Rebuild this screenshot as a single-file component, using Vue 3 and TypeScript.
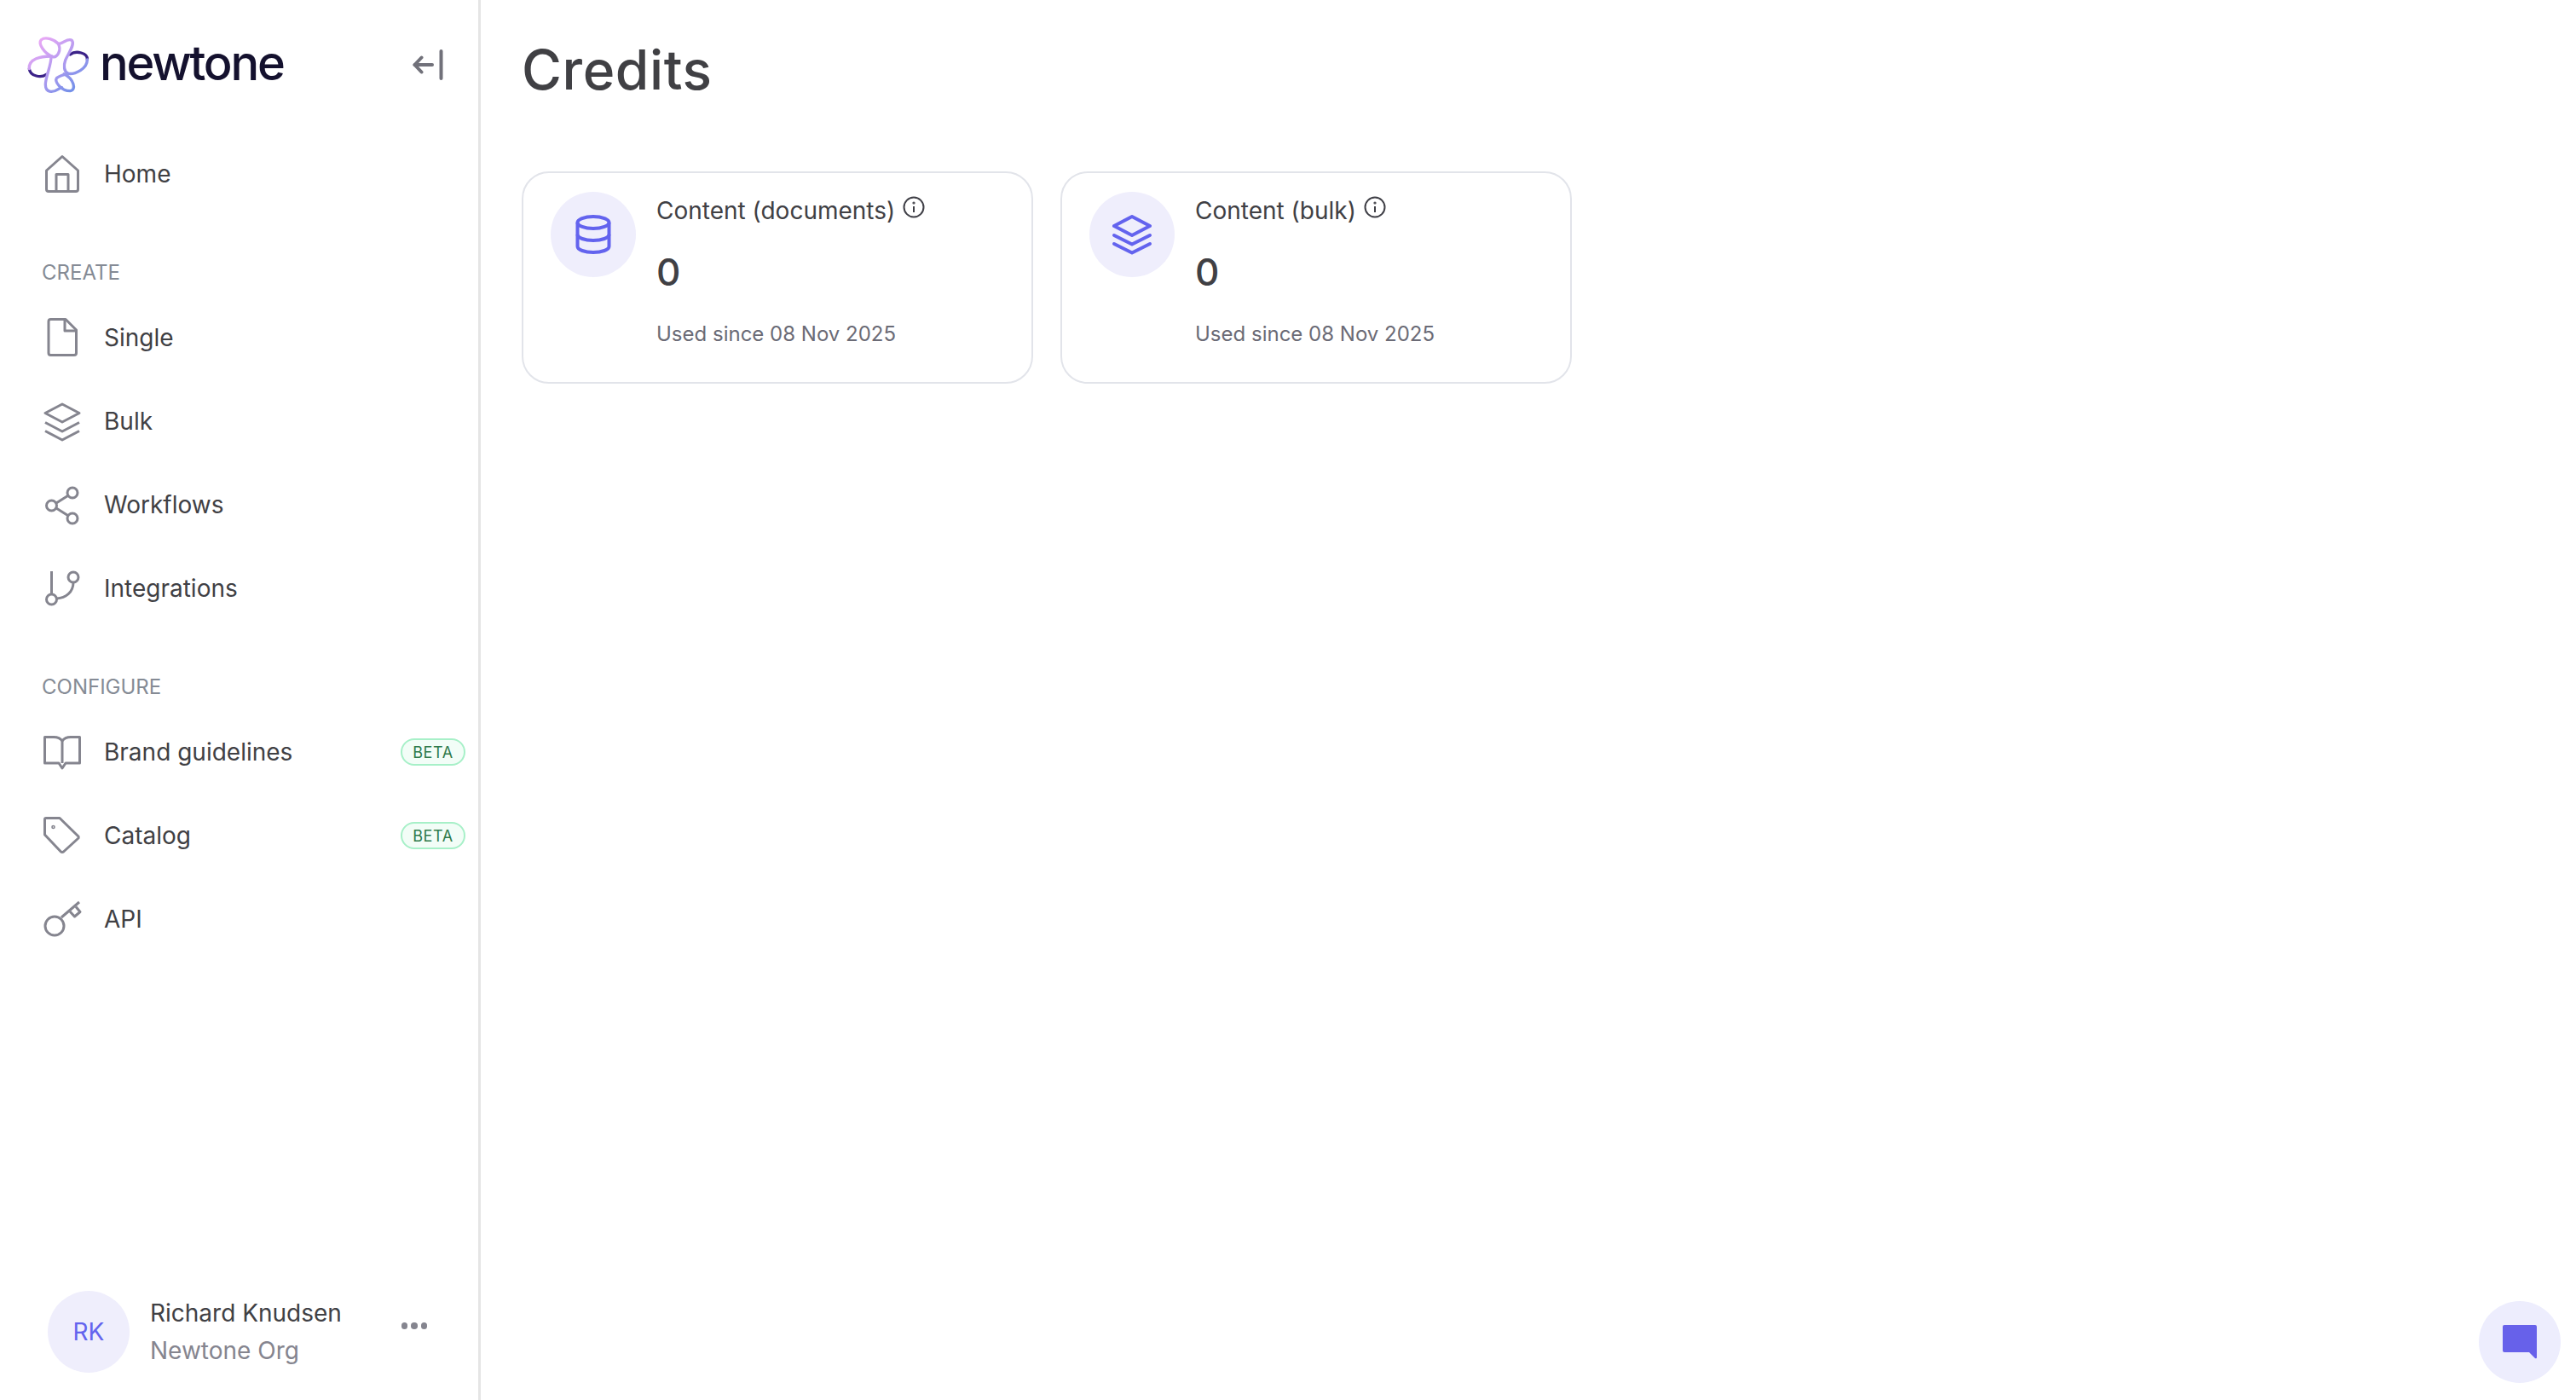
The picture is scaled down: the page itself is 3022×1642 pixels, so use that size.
<script setup lang="ts">
interface NavItem {
  label: string;
  icon: string;
  beta?: boolean;
}

interface CreditCard {
  title: string;
  icon: string;
  value: number;
  since: string;
}

const createItems: NavItem[] = [
  { label: 'Single', icon: 'file' },
  { label: 'Bulk', icon: 'layers' },
  { label: 'Workflows', icon: 'share' },
  { label: 'Integrations', icon: 'branch' },
];

const configureItems: NavItem[] = [
  { label: 'Brand guidelines', icon: 'book', beta: true },
  { label: 'Catalog', icon: 'tag', beta: true },
  { label: 'API', icon: 'key' },
];

const cards: CreditCard[] = [
  { title: 'Content (documents)', icon: 'database', value: 0, since: 'Used since 08 Nov 2025' },
  { title: 'Content (bulk)', icon: 'layers', value: 0, since: 'Used since 08 Nov 2025' },
];

const sections = [
  { name: 'CREATE', items: createItems },
  { name: 'CONFIGURE', items: configureItems },
];

// nav icons are drawn on a 50x50 box
const iconPaths: Record<string, string[]> = {
  home: ['M5.5 21 L24 4.5 L42.5 21 V43 Q42.5 45.5 40 45.5 H8 Q5.5 45.5 5.5 43 Z', 'M17 45.5 V25.5 H31 V45.5'],
  file: ['M10.5 3.5 H28 L40.5 16 V43 Q40.5 45.5 38 45.5 H10.5 Q8 45.5 8 43 V6 Q8 3.5 10.5 3.5 Z', 'M27 3.5 V17 H40.5'],
  layers: ['M24 5 L44 15.5 L24 26 L4 15.5 Z', 'M4 26.5 L24 37 L44 26.5', 'M4 36.5 L24 47 L44 36.5'],
  share: ['M17 23 L30.5 14.5', 'M17 29 L30.5 37.5'],
  branch: ['M11.5 5 V32', 'M37 18 C37 30 28 36 17.5 37'],
  book: ['M3.5 7.5 H14 Q21 7.5 24 12 Q27 7.5 34 7.5 H44.5 V38 H28 L24 44 L20 38 H3.5 Z', 'M24 12 V38'],
  tag: ['M3.5 6 Q3.5 4.5 5 4.5 H21 L43 26 Q43.5 27 43 28 L25.5 44 Q24 45 22.5 44 L3.5 24 Z'],
  key: ['M23 23 L44 5', 'M33 16 L38.5 22 L45 16.5 L40 10.5'],
};
</script>

<template>
  <div class="page">
    <aside class="sidebar">
      <div class="brand">
        <svg class="logo-mark" viewBox="0 0 270 240" fill="none" stroke-width="10" stroke-linecap="round">
          <defs>
            <linearGradient id="logoGrad" gradientUnits="userSpaceOnUse" x1="40" y1="40" x2="200" y2="220">
              <stop offset="0" stop-color="#f0aaf6" />
              <stop offset="0.5" stop-color="#b59bf0" />
              <stop offset="1" stop-color="#6a8fe8" />
            </linearGradient>
          </defs>
          <path d="M172 90 C192 74 235 84 232 108" stroke="#3b2288" />
          <path d="M28 140 C32 168 70 172 88 160" stroke="#3b2288" />
          <g stroke="url(#logoGrad)">
            <path d="M130 52 C118 38 85 25 70 38 C58 52 80 85 110 98 C128 102 142 72 130 52 Z" />
            <path d="M130 52 C145 52 165 30 178 40 C190 55 165 85 155 110 C148 130 150 150 165 157 C190 160 232 140 232 108" />
            <path d="M108 96 C70 95 24 105 28 140" />
            <path d="M105 97 C106 125 85 170 85 195 C85 225 110 225 130 212 C136 208 140 206 143 206" />
            <path d="M165 157 C150 160 135 165 125 172 C115 185 140 218 172 218 C195 215 185 175 150 158" />
          </g>
        </svg>
        <span class="wordmark">newtone</span>
        <button class="collapse" type="button" aria-label="Collapse sidebar">
          <svg viewBox="0 0 36 36" width="36" height="36" fill="none" stroke="#71717a" stroke-width="4" stroke-linecap="round" stroke-linejoin="round">
            <path d="M33.5 2 V34" />
            <path d="M2.5 18 H23" />
            <path d="M10.5 9.5 L2.5 18 L10.5 26.5" />
          </svg>
        </button>
      </div>

      <nav class="nav">
        <a class="nav-item">
          <svg class="nav-icon" viewBox="0 0 50 50" fill="none">
            <path v-for="d in iconPaths.home" :key="d" :d="d" />
          </svg>
          <span>Home</span>
        </a>

        <section v-for="section in sections" :key="section.name" class="nav-section">
          <h4 class="nav-label">{{ section.name }}</h4>
          <a v-for="item in section.items" :key="item.label" class="nav-item">
            <svg class="nav-icon" viewBox="0 0 50 50" fill="none">
              <path v-for="d in iconPaths[item.icon]" :key="d" :d="d" />
              <template v-if="item.icon === 'share'">
                <circle cx="11.5" cy="26" r="6" />
                <circle cx="36" cy="11" r="6" />
                <circle cx="36" cy="41" r="6" />
              </template>
              <template v-if="item.icon === 'branch'">
                <circle cx="11.5" cy="38" r="6" />
                <circle cx="37" cy="12" r="6" />
              </template>
              <circle v-if="item.icon === 'tag'" cx="13.5" cy="15" r="0.8" />
              <circle v-if="item.icon === 'key'" cx="15" cy="33" r="11" />
            </svg>
            <span>{{ item.label }}</span>
            <span v-if="item.beta" class="beta">BETA</span>
          </a>
        </section>
      </nav>

      <div class="user">
        <div class="avatar">RK</div>
        <div class="user-text">
          <div class="user-name">Richard Knudsen</div>
          <div class="user-org">Newtone Org</div>
        </div>
        <div class="dots"><i></i><i></i><i></i></div>
      </div>
    </aside>

    <main class="main">
      <h1 class="title">Credits</h1>
      <div class="cards">
        <div v-for="card in cards" :key="card.title" class="card">
          <div class="card-icon">
            <svg v-if="card.icon === 'database'" viewBox="0 0 44 48" width="44" height="48" fill="none" stroke="#6363ee" stroke-width="4">
              <ellipse cx="22" cy="10" rx="18.5" ry="7" />
              <path d="M3.5 10 V38 C3.5 42 12 45 22 45 C32 45 40.5 42 40.5 38 V10" />
              <path d="M3.5 24 C3.5 28 12 31 22 31 C32 31 40.5 28 40.5 24" />
            </svg>
            <svg v-else viewBox="0 0 48 48" width="48" height="48" fill="none" stroke="#6363ee" stroke-width="4" stroke-linecap="round" stroke-linejoin="round">
              <path d="M24 3 L45 14 L24 25 L3 14 Z" />
              <path d="M3 25 L24 35.5 L45 25" />
              <path d="M3 35 L24 45.5 L45 35" />
            </svg>
          </div>
          <div class="card-body">
            <div class="card-title">
              <span>{{ card.title }}</span>
              <svg class="info" viewBox="0 0 26 26" width="26" height="26" fill="none" stroke="#3f3f46" stroke-width="2">
                <circle cx="13" cy="13" r="11.5" />
                <path d="M13 12 V19" />
                <circle cx="13" cy="8" r="0.6" />
              </svg>
            </div>
            <div class="card-value">{{ card.value }}</div>
            <div class="card-since">{{ card.since }}</div>
          </div>
        </div>
      </div>
    </main>

    <button class="chat" type="button" aria-label="Open chat">
      <svg viewBox="0 0 40 40" width="40" height="40">
        <path d="M2 0 H38 Q40 0 40 2 V38 Q40 40 38 39 L31 32 H2 Q0 32 0 30 V2 Q0 0 2 0 Z" fill="#6761ea" />
      </svg>
    </button>
  </div>
</template>

<style scoped>
.page {
  display: flex;
  height: 1642px;
  background: #fff;
  color: #404044;
  font-family: Inter, "Liberation Sans", sans-serif;
  font-size: 28px;
}

.sidebar {
  width: 564px;
  box-sizing: border-box;
  border-right: 3px solid #e5e5e5;
  display: flex;
  flex-direction: column;
  flex-shrink: 0;
}

.brand {
  display: flex;
  align-items: center;
  height: 76px;
  padding: 36px 41px 0 25px;
}

.logo-mark {
  width: 90px;
  height: 80px;
  flex-shrink: 0;
}

.wordmark {
  margin-left: 2px;
  font-size: 56px;
  font-weight: 500;
  letter-spacing: -2.2px;
  color: #14112e;
  line-height: 1;
}

.collapse {
  margin-left: auto;
  margin-top: 4px;
  padding: 0;
  border: none;
  background: none;
  display: flex;
}

.nav {
  flex: 1;
  padding: 43px 0 0 49px;
}

.nav-item {
  display: flex;
  align-items: center;
  height: 98px;
  gap: 23px;
  padding-right: 15px;
}

.nav-icon {
  width: 50px;
  height: 50px;
  flex-shrink: 0;
  stroke: #85858f;
  stroke-width: 3;
  stroke-linejoin: round;
}

.nav-section {
  margin-top: 32px;
}

.nav-label {
  margin: 0 0 12px;
  padding-top: 20px;
  font-size: 24px;
  line-height: 30px;
  font-weight: 400;
  color: #858b95;
}

.beta {
  margin-left: auto;
  box-sizing: border-box;
  width: 76px;
  height: 32px;
  border: 2px solid #a7f0c8;
  border-radius: 16px;
  background: #f2fdf7;
  color: #2f7a4a;
  font-size: 18px;
  letter-spacing: 0.6px;
  display: flex;
  align-items: center;
  justify-content: center;
}

.user {
  display: flex;
  align-items: center;
  padding: 0 60px 32px 56px;
}

.avatar {
  width: 96px;
  height: 96px;
  border-radius: 50%;
  background: #efeefc;
  color: #6363ee;
  display: flex;
  align-items: center;
  justify-content: center;
}

.user-text {
  margin-left: 24px;
  line-height: 44px;
}

.user-org {
  color: #85858f;
}

.dots {
  margin-left: auto;
  display: flex;
  gap: 4px;
  margin-bottom: 14px;
}

.dots i {
  width: 7.5px;
  height: 7.5px;
  border-radius: 50%;
  background: #85858f;
}

.main {
  flex: 1;
  padding: 40px 48px;
}

.title {
  margin: 0;
  font-size: 64px;
  line-height: 84px;
  font-weight: 500;
  letter-spacing: 0.6px;
  color: #404044;
}

.cards {
  display: flex;
  gap: 32px;
  margin-top: 77px;
}

.card {
  box-sizing: border-box;
  width: 600px;
  height: 249px;
  border: 2px solid #e2e4ea;
  border-radius: 32px;
  padding: 22px 32px;
  display: flex;
  gap: 24px;
}

.card-icon {
  width: 100px;
  height: 100px;
  border-radius: 50%;
  background: #efeefc;
  display: flex;
  align-items: center;
  justify-content: center;
  flex-shrink: 0;
}

.card-title {
  display: flex;
  align-items: flex-start;
  gap: 9px;
  line-height: 44px;
}

.info {
  margin-top: 5px;
}

.card-value {
  margin-top: 22px;
  font-size: 44px;
  line-height: 56px;
  font-weight: 500;
}

.card-since {
  margin-top: 30px;
  font-size: 24px;
  line-height: 30px;
  color: #6b6b76;
}

.chat {
  position: fixed;
  right: 18px;
  bottom: 20px;
  width: 96px;
  height: 96px;
  padding: 0;
  border: none;
  border-radius: 50%;
  background: #ededfd;
  display: flex;
  align-items: center;
  justify-content: center;
}
</style>

<style>
html,
body {
  margin: 0;
  background: #fff;
}
</style>
